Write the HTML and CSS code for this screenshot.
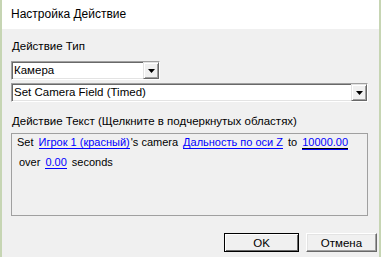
FILE: index.html
```html
<!DOCTYPE html>
<html lang="ru">
<head>
    <meta charset="UTF-8">
    <title>Настройка Действие</title>
    <link rel="stylesheet" href="styles.css">
</head>
<body>
    <div class="window">
        <div class="titlebar">Настройка Действие</div>

        <div class="content">
            <div class="label label-type">Действие Тип</div>

            <!-- action type combo -->
            <div class="combo combo-short">
                <span class="combo-text">Камера</span>
                <span class="combo-btn">
                    <svg width="7" height="4" viewBox="0 0 7 4"><path d="M0 0h7L3.5 4z" fill="#000"/></svg>
                </span>
            </div>

            <!-- action combo -->
            <div class="combo combo-long">
                <span class="combo-text">Set Camera Field (Timed)</span>
                <span class="combo-btn">
                    <svg width="7" height="4" viewBox="0 0 7 4"><path d="M0 0h7L3.5 4z" fill="#000"/></svg>
                </span>
            </div>

            <div class="label label-text">Действие Текст (Щелкните в подчеркнутых областях)</div>

            <div class="textbox">
                <div class="tb-line">
                    <span class="word">Set</span>
                    <span class="link">Игрок 1 (красный)</span>
                    <span class="word tight">'s camera</span>
                    <span class="link">Дальность по оси Z</span>
                    <span class="word">to</span>
                    <span class="link selected">10000.00</span>
                </div>
                <div class="tb-line line-2">
                    <span class="word">over</span>
                    <span class="link">0.00</span>
                    <span class="word">seconds</span>
                </div>
            </div>

            <div class="buttons">
                <button class="btn btn-default">OK</button>
                <button class="btn btn-cancel">Отмена</button>
            </div>
        </div>
    </div>
</body>
</html>
```

FILE: styles.css
```css
* {
    box-sizing: border-box;
}

body {
    margin: 0;
    font-family: "Liberation Sans", Arial, sans-serif;
    font-size: 11.5px;
    color: #000;
}

.window {
    width: 381px;
    height: 257px;
    border-left: 2px solid #c6d5b3;
    border-right: 2px solid #c6d5b3;
    background: #f0f0f0;
    display: flex;
    flex-direction: column;
}

.titlebar {
    height: 29px;
    background: #fff;
    padding-left: 9px;
    font-size: 12px;
    line-height: 29px;
}

.content {
    flex: 1;
    display: flex;
    flex-direction: column;
    padding: 0 2px 0 9px;
}

.label {
    padding-left: 1px;
    line-height: 13px;
}

.label-type {
    margin-top: 11px;
}

.label-text {
    margin-top: 13px;
}

/* sunken combo boxes */
.combo {
    height: 19px;
    display: flex;
    background: #fff;
    border: 1px solid;
    border-color: #a0a0a0 #fff #fff #a0a0a0;
    box-shadow: inset 1px 1px 0 #696969, inset -1px -1px 0 #e3e3e3;
}

.combo-short {
    width: 149px;
    margin-top: 8px;
}

.combo-long {
    width: 357px;
    margin-top: 3px;
}

.combo-text {
    flex: 1;
    padding-left: 2px;
    line-height: 17px;
}

.combo-btn {
    width: 16px;
    height: 17px;
    display: flex;
    align-items: center;
    justify-content: center;
    background: #f0f0f0;
    border: 1px solid;
    border-color: #e3e3e3 #696969 #696969 #e3e3e3;
    box-shadow: inset 1px 1px 0 #fff, inset -1px -1px 0 #a0a0a0;
}

.textbox {
    width: 357px;
    height: 83px;
    margin-top: 5px;
    padding: 2px 5px 0;
    border: 1px solid #a0a0a0;
    font-size: 11px;
}

.tb-line {
    height: 20px;
    display: flex;
    align-items: baseline;
    gap: 5px;
}

.line-2 {
    padding-left: 2px;
}

.word,
.link {
    display: inline-block;
    line-height: 12px;
    white-space: nowrap;
}

.tight {
    margin-left: -4px;
}

.link {
    color: #00f;
    border-bottom: 1px solid #00f;
}

.link.selected {
    border-bottom-color: #000;
    box-shadow: 0 1px 0 #00f;
}

.buttons {
    display: flex;
    justify-content: flex-end;
    gap: 7px;
    margin-top: 17px;
}

.btn {
    height: 19px;
    padding: 0;
    font: inherit;
    color: #000;
    background: #f0f0f0;
    border: 1px solid;
    border-color: #fff #696969 #696969 #fff;
    box-shadow: inset -1px -1px 0 #a0a0a0, inset 1px 1px 0 #e3e3e3;
}

.btn-default {
    width: 75px;
    border-color: #000;
    box-shadow: inset 1px 1px 0 #fff, inset -1px -1px 0 #696969;
}

.btn-cancel {
    width: 71px;
}
```
